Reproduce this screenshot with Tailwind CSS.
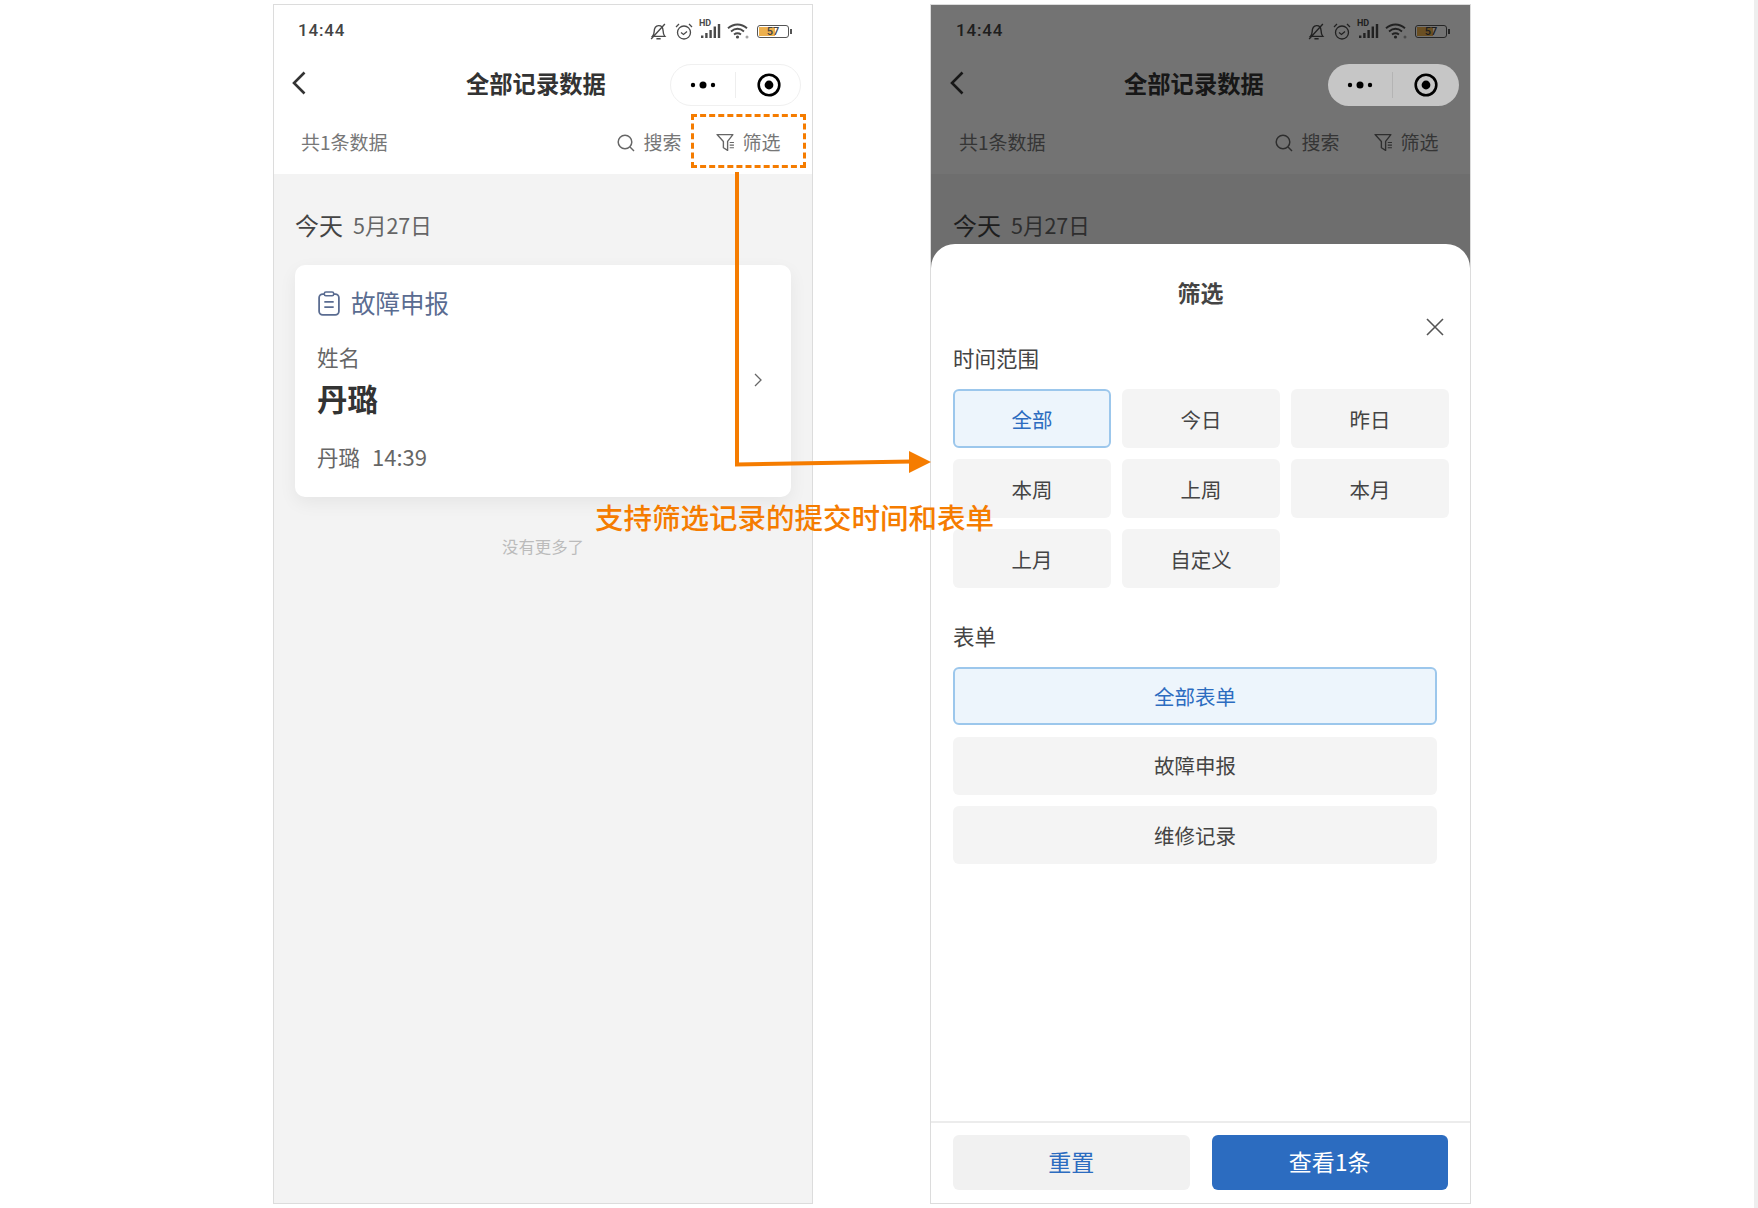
<!DOCTYPE html>
<html lang="zh-CN">
<head>
  <meta charset="UTF-8">
  <title>全部记录数据</title>
  <script src="https://cdn.jsdelivr.net/npm/@tailwindcss/browser@4"></script>
</head>
<body class="bg-white">
  <svg class="hidden">
    <symbol id="i-bell" viewBox="0 0 17 16"><path d="M3.2 12.6c1.2-1.3 1.6-2.6 1.7-4.6C5 4.8 6.4 2.6 9 2.4c2.4-.1 4 1.600 4.200 4.200.1 2.400.4 4.400 1.800 6H3.200zM7 14.800h4M15 1 2 15" fill="none" stroke="currentColor" stroke-width="1.300"/></symbol>
    <symbol id="i-clock" viewBox="0 0 18 17"><circle cx="9" cy="9.500" r="6.500" fill="none" stroke="currentColor" stroke-width="1.300"/><path d="M6 9.500l2.500 2 3.500-3M1 4l3-3M17 4l-3-3" fill="none" stroke="currentColor" stroke-width="1.300"/></symbol>
    <symbol id="i-signal" viewBox="0 0 22 16"><path d="M1 15h2.400v-2.500H1zM5.200 15h2.400V10H5.200zM9.400 15h2.400V7H9.400zM13.600 15h2.400V3.500h-2.400zM17.800 15h2.400V1h-2.400z" fill="currentColor"/></symbol>
    <symbol id="i-wifi" viewBox="0 0 23 16"><path d="M1 5.200c5.800-5 13.200-5 19 0M4 8.500c4-3.300 9-3.300 13 0M7 11.500c2.200-1.600 4.800-1.600 7 0" fill="none" stroke="currentColor" stroke-width="1.900"/><circle cx="10.500" cy="14" r="1.600" fill="currentColor"/><circle cx="20" cy="14" r="1.500" fill="currentColor" opacity=".5"/></symbol>
    <symbol id="i-search" viewBox="0 0 18 18"><circle cx="8" cy="8" r="6.800" fill="none" stroke="currentColor" stroke-width="1.500"/><path d="M13 13l4 4" stroke="currentColor" stroke-width="1.500"/></symbol>
    <symbol id="i-filter" viewBox="0 0 18 18"><path d="M1 1.500h15l-5 6.500v8.500L7 14V8z" fill="none" stroke="currentColor" stroke-width="1.300" stroke-linejoin="round"/><path d="M13 9h4M13 11.500h4M13 14h4" stroke="currentColor" stroke-width="1"/></symbol>
    <symbol id="i-back" viewBox="0 0 14 24"><path d="M12.500 1.500 2 12l10.500 10.500" fill="none" stroke="currentColor" stroke-width="2.600"/></symbol>
    <symbol id="i-target" viewBox="0 0 24 24"><circle cx="12" cy="12" r="10.300" fill="none" stroke="currentColor" stroke-width="2.600"/><circle cx="12" cy="12" r="4.400" fill="currentColor"/></symbol>
    <symbol id="i-dots" viewBox="0 0 26 8"><circle cx="3" cy="4" r="2.200" fill="currentColor"/><circle cx="13" cy="4" r="3.500" fill="currentColor"/><circle cx="23" cy="4" r="2.200" fill="currentColor"/></symbol>
  </svg>

  <div class="relative w-[1758px] h-[1208px] overflow-hidden pt-[4px] pl-[273px] flex gap-[117px] font-['Noto_Sans_CJK_SC','Noto_Sans',sans-serif] text-[#333]">

    <!-- 列表页 -->
    <div class="w-[540px] h-[1200px] border border-[#dcdcdc] bg-[#f3f3f3] flex flex-col shrink-0">
      <div class="bg-white h-[169px] shrink-0">
        <div class="h-[52px] flex items-center pl-[24px] pr-[20px]">
          <span class="font-['Roboto',sans-serif] font-medium text-[17px] tracking-[0.8px] text-[#444]">14:44</span>
          <div class="ml-auto flex items-center text-[#4a4a4a]">
            <svg class="w-[18px] h-[17px]"><use href="#i-bell"/></svg>
            <svg class="w-[18px] h-[17px] ml-[8px]"><use href="#i-clock"/></svg>
            <div class="relative ml-[7px] w-[22px] h-[16px]"><span class="absolute -top-[4px] -left-[1px] text-[9px] leading-[9px] font-bold font-['Roboto',sans-serif]">HD</span><svg class="w-[22px] h-[16px]"><use href="#i-signal"/></svg></div>
            <svg class="w-[23px] h-[16px] ml-[5px]"><use href="#i-wifi"/></svg>
            <div class="relative ml-[7px] w-[32px] h-[13px] border border-[#555] rounded-[3px] p-[1px] flex"><div class="w-[16px] bg-[#ecb04e]"></div><span class="absolute inset-0 text-center text-[11px] leading-[11px] font-['Roboto',sans-serif] font-medium text-[#444]">57</span></div>
            <div class="w-[2px] h-[5px] bg-[#555] ml-[1px]"></div>
          </div>
        </div>
        <div class="h-[56px] flex items-center pl-[18px] pr-[11px]">
          <svg class="w-[14px] h-[24px] -mt-[4px] text-[#333]"><use href="#i-back"/></svg>
          <span class="ml-[160px] -mt-[5px] text-[23.300px] font-bold leading-[30px] text-[#333]">全部记录数据</span>
          <div class="ml-auto w-[131px] h-[42px] rounded-full border border-[#f0f0f0] bg-white flex items-center">
            <svg class="ml-[19px] w-[26px] h-[8px] text-black"><use href="#i-dots"/></svg>
            <div class="ml-[19px] w-px h-[26px] bg-[#eee]"></div>
            <svg class="ml-[21px] w-[24px] h-[24px] text-black"><use href="#i-target"/></svg>
          </div>
        </div>
        <div class="h-[59px] flex items-center pl-[27px] text-[19px] text-[#777]">
          <span>共1条数据</span>
          <svg class="ml-[229px] w-[18px] h-[18px] text-[#666]"><use href="#i-search"/></svg>
          <span class="ml-[9px]">搜索</span>
          <svg class="ml-[34px] w-[19px] h-[19px] text-[#666]"><use href="#i-filter"/></svg>
          <span class="ml-[8px]">筛选</span>
        </div>
      </div>
      <div class="px-[21px] pt-[33px]">
        <div class="flex items-center h-[36px]">
          <span class="text-[24px] text-[#444]">今天</span>
          <span class="ml-[10px] text-[21.500px] text-[#666]">5月27日</span>
        </div>
        <div class="mt-[22px] w-[496px] h-[232px] bg-white rounded-[10px] shadow-[0_6px_18px_rgba(0,0,0,0.06)] pl-[22px] pt-[23px] relative">
          <div class="flex items-center h-[30px]">
            <svg class="ml-[1px] w-[22px] h-[25px] text-[#5a6c91]" viewBox="0 0 21 24"><rect x="1" y="3" width="19" height="20" rx="3.500" fill="none" stroke="currentColor" stroke-width="1.700"/><rect x="6" y="1" width="9" height="3.500" rx="1.500" fill="white" stroke="currentColor" stroke-width="1.500"/><path d="M6 10.500h9M6 15.500h9" stroke="currentColor" stroke-width="1.700"/></svg>
            <span class="ml-[11px] text-[24.500px] text-[#5a6c91]">故障申报</span>
          </div>
          <div class="mt-[24px] h-[30px] leading-[30px] text-[21.500px] text-[#666]">姓名</div>
          <div class="mt-[4px] h-[44px] leading-[44px] text-[30.500px] font-bold text-[#333]">丹璐</div>
          <div class="mt-[21px] h-[30px] leading-[30px] text-[21.500px] text-[#666]"><span>丹璐</span><span class="ml-[12px] text-[22px]">14:39</span></div>
          <svg class="absolute top-[108px] right-[29px] w-[8px] h-[14px] text-[#666]" viewBox="0 0 8 14"><path d="M1 1l6 6-6 6" fill="none" stroke="currentColor" stroke-width="1.300"/></svg>
        </div>
        <div class="mt-[38px] text-center text-[16.400px] leading-[22px] text-[#bbb]">没有更多了</div>
      </div>
    </div>

    <!-- 筛选弹层 -->
    <div class="relative w-[541px] h-[1200px] border border-[#dcdcdc] bg-[#f3f3f3] flex flex-col shrink-0">
      <div class="bg-white h-[169px] shrink-0">
        <div class="h-[52px] flex items-center pl-[25px] pr-[20px]">
          <span class="font-['Roboto',sans-serif] font-medium text-[17px] tracking-[0.8px] text-[#444]">14:44</span>
          <div class="ml-auto flex items-center text-[#4a4a4a]">
            <svg class="w-[18px] h-[17px]"><use href="#i-bell"/></svg>
            <svg class="w-[18px] h-[17px] ml-[8px]"><use href="#i-clock"/></svg>
            <div class="relative ml-[7px] w-[22px] h-[16px]"><span class="absolute -top-[4px] -left-[1px] text-[9px] leading-[9px] font-bold font-['Roboto',sans-serif]">HD</span><svg class="w-[22px] h-[16px]"><use href="#i-signal"/></svg></div>
            <svg class="w-[23px] h-[16px] ml-[5px]"><use href="#i-wifi"/></svg>
            <div class="relative ml-[7px] w-[32px] h-[13px] border border-[#555] rounded-[3px] p-[1px] flex"><div class="w-[16px] bg-[#ecb04e]"></div><span class="absolute inset-0 text-center text-[11px] leading-[11px] font-['Roboto',sans-serif] font-medium text-[#444]">57</span></div>
            <div class="w-[2px] h-[5px] bg-[#555] ml-[1px]"></div>
          </div>
        </div>
        <div class="h-[56px] flex items-center pl-[19px] pr-[11px]">
          <svg class="w-[14px] h-[24px] -mt-[4px] text-[#333]"><use href="#i-back"/></svg>
          <span class="ml-[160px] -mt-[5px] text-[23.300px] font-bold leading-[30px] text-[#333]">全部记录数据</span>
          <div class="relative z-10 ml-auto w-[131px] h-[42px] rounded-full bg-[#c6c6c6] flex items-center">
            <svg class="ml-[19px] w-[26px] h-[8px] text-black"><use href="#i-dots"/></svg>
            <div class="ml-[19px] w-px h-[26px] bg-[#b4b4b4]"></div>
            <svg class="ml-[21px] w-[24px] h-[24px] text-black"><use href="#i-target"/></svg>
          </div>
        </div>
        <div class="h-[59px] flex items-center pl-[28px] text-[19px] text-[#777]">
          <span>共1条数据</span>
          <svg class="ml-[229px] w-[18px] h-[18px] text-[#666]"><use href="#i-search"/></svg>
          <span class="ml-[9px]">搜索</span>
          <svg class="ml-[34px] w-[19px] h-[19px] text-[#666]"><use href="#i-filter"/></svg>
          <span class="ml-[8px]">筛选</span>
        </div>
      </div>
      <div class="px-[22px] pt-[33px]">
        <div class="flex items-center h-[36px]">
          <span class="text-[24px] text-[#444]">今天</span>
          <span class="ml-[10px] text-[21.500px] text-[#666]">5月27日</span>
        </div>
      </div>
      <div class="absolute inset-0 bg-black/55"></div>
      <div class="absolute left-0 right-0 bottom-0 top-[239px] z-20 bg-white rounded-t-[24px] px-[22px] pt-[33px] flex flex-col">
        <div class="text-center text-[23px] leading-[30px] font-bold text-[#444]">筛选</div>
        <svg class="absolute top-[74px] right-[26px] w-[18px] h-[18px] text-[#555]" viewBox="0 0 18 18"><path d="M1 1l16 16M17 1 1 17" fill="none" stroke="currentColor" stroke-width="1.600"/></svg>
        <div class="mt-[36px] text-[21.500px] leading-[30px] text-[#444]">时间范围</div>
        <div class="mt-[16px] w-[496px] grid grid-cols-3 gap-[11px] text-[20.500px] text-[#444]">
          <div class="h-[59px] pt-[1px] flex items-center justify-center rounded-[6px] bg-[#edf5fc] border-2 border-[#9cc7ec] text-[#2c6cc0]">全部</div>
          <div class="h-[59px] pt-[1px] flex items-center justify-center rounded-[6px] bg-[#f4f4f4]">今日</div>
          <div class="h-[59px] pt-[1px] flex items-center justify-center rounded-[6px] bg-[#f4f4f4]">昨日</div>
          <div class="h-[59px] pt-[1px] flex items-center justify-center rounded-[6px] bg-[#f4f4f4]">本周</div>
          <div class="h-[59px] pt-[1px] flex items-center justify-center rounded-[6px] bg-[#f4f4f4]">上周</div>
          <div class="h-[59px] pt-[1px] flex items-center justify-center rounded-[6px] bg-[#f4f4f4]">本月</div>
          <div class="h-[59px] pt-[1px] flex items-center justify-center rounded-[6px] bg-[#f4f4f4]">上月</div>
          <div class="h-[59px] pt-[1px] flex items-center justify-center rounded-[6px] bg-[#f4f4f4]">自定义</div>
        </div>
        <div class="mt-[33px] text-[21.500px] leading-[30px] text-[#444]">表单</div>
        <div class="mt-[16px] w-[484px] flex flex-col gap-[11.500px] text-[20.500px] text-[#444]">
          <div class="h-[58px] flex items-center justify-center rounded-[6px] bg-[#edf5fc] border-2 border-[#9cc7ec] text-[#2c6cc0]">全部表单</div>
          <div class="h-[58px] flex items-center justify-center rounded-[6px] bg-[#f4f4f4]">故障申报</div>
          <div class="h-[58px] flex items-center justify-center rounded-[6px] bg-[#f4f4f4]">维修记录</div>
        </div>
        <div class="mt-auto -mx-[22px] border-t-2 border-[#ececec] px-[22px] pt-[12px] pb-[13px] flex gap-[22px] text-[23px]">
          <div class="w-[237px] h-[55px] pb-[2px] rounded-[6px] bg-[#f1f1f1] text-[#2c6cc0] flex items-center justify-center">重置</div>
          <div class="w-[237px] h-[55px] pb-[2px] rounded-[6px] bg-[#2c6cc0] text-white flex items-center justify-center">查看1条</div>
        </div>
      </div>
    </div>

    <!-- 标注 -->
    <div class="absolute left-[691px] top-[114px] w-[115px] h-[54px] border-[3px] border-dashed border-[#f57c00]"></div>
    <svg class="absolute left-0 top-0 z-30" width="1758" height="1208" viewBox="0 0 1758 1208"><path d="M737 172V464.500L912 461.500" fill="none" stroke="#f57c00" stroke-width="4"/><path d="M909 451 931 462 909 473z" fill="#f57c00"/></svg>
    <div class="absolute z-30 left-[595px] top-[497px] text-[28.500px] leading-[40px] font-medium whitespace-nowrap text-[#f57c00]">支持筛选记录的提交时间和表单</div>
    <div class="absolute right-0 top-0 w-[4px] h-[1208px] bg-[#eeeeee]"></div>
  </div>
</body>
</html>
